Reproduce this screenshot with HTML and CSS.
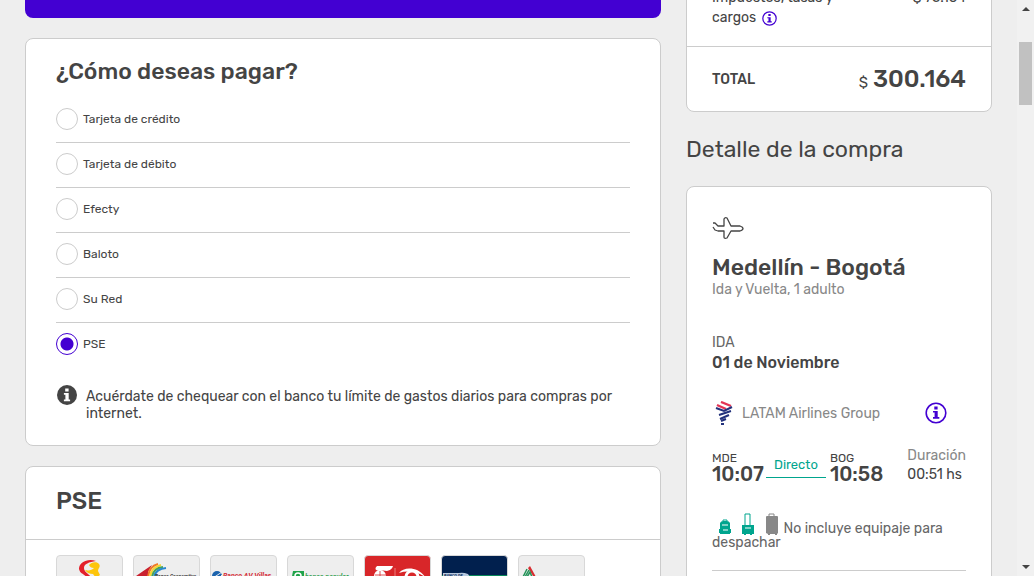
FILE: index.html
```html
<!DOCTYPE html>
<html lang="es">
<head>
<meta charset="utf-8">
<meta name="viewport" content="width=device-width, initial-scale=1">
<title>Checkout</title>
<link rel="stylesheet" href="styles.css">
</head>
<body>
<div class="window">
<main class="page">
  <div class="payment">
    <div class="banner"></div>
    <section class="card">
      <h2 class="card-title">¿Cómo deseas pagar?</h2>
      <div class="options">
        <label class="option"><input class="radio" type="radio" name="method">Tarjeta de crédito</label>
        <label class="option"><input class="radio" type="radio" name="method">Tarjeta de débito</label>
        <label class="option"><input class="radio" type="radio" name="method">Efecty</label>
        <label class="option"><input class="radio" type="radio" name="method">Baloto</label>
        <label class="option"><input class="radio" type="radio" name="method">Su Red</label>
        <label class="option"><input class="radio" type="radio" name="method" checked>PSE</label>
      </div>
      <div class="note">
        <svg class="note-icon" viewBox="0 0 20 20" aria-hidden="true"><circle cx="10" cy="10" r="10" fill="#444"/><path d="M8.2 3.4h3.4v3H8.2zM6.9 8h4.8v6.5h1.4v1.7H6.9v-1.7h1.5V9.7H6.9z" fill="#fff"/></svg>
        <p class="note-text">Acuérdate de chequear con el banco tu límite de gastos diarios para compras por internet.</p>
      </div>
    </section>
    <section class="card banks-card">
      <h2 class="banks-title">PSE</h2>
      <div class="banks">
        <button class="bank" aria-label="Banco 1"><svg viewBox="0 0 65 44"><path d="M39 5C31 2 22 6 22 13c1 5 6 5 8 9h5c-3-4-8-6-8-10 0-4 5-6 12-7z" fill="#e3202b"/><path d="M32 9c2-3 8-4 10-1 2 3-1 4-1 7l2 4-4 3-3-4c-3 0-6-1-8-4 4 1 7 0 9-2-3 0-4-1-5-3z" fill="#fdc50c"/></svg></button>
        <button class="bank" aria-label="Banco Cooperativo"><svg viewBox="0 0 65 44"><path d="M2 20L18 9l-4 7 1 12z" fill="#c9202f"/><path d="M14 23c0-8 3-13 10-15" fill="none" stroke="#f07b28" stroke-width="2"/><path d="M16 23c0-7 3-12 11-14" fill="none" stroke="#f5d52f" stroke-width="2"/><path d="M18 23c0-6 3-11 11-12" fill="none" stroke="#46a35a" stroke-width="2"/><path d="M20 23c0-6 3-10 12-11" fill="none" stroke="#2688cd" stroke-width="2"/><text class="logo-text" x="21" y="22" font-size="5" fill="#333">Banco Cooperativo</text></svg></button>
        <button class="bank" aria-label="Banco AV Villas"><svg viewBox="0 0 65 44"><circle cx="6" cy="20" r="5" fill="#1b63ad"/><path d="M2 22l9-6M5 25l6-6" stroke="#eee" stroke-width="1"/><text class="logo-text" x="12" y="22" font-size="7" fill="#d52b35">Banco AV Villas</text></svg></button>
        <button class="bank" aria-label="Banco Popular"><svg viewBox="0 0 65 44"><path d="M5 15h11v11H3z" fill="#20a34a"/><circle cx="10" cy="20" r="3" fill="none" stroke="#fff" stroke-width="1.5"/><text class="logo-text" x="17" y="23" font-size="7" fill="#35a052">banco popular</text></svg></button>
        <button class="bank bank-red" aria-label="Colpatria"><svg viewBox="0 0 65 44"><path d="M12 10h16q-1 4-6 5-4-1-8 0-6-1-2-5z" fill="#fff"/><circle cx="15" cy="20" r="6" fill="#fff"/><path d="M10 19h11M15 15v11" stroke="#d82629" stroke-width=".8"/><path d="M30 12v20" stroke="#ec7c7d"/><path d="M34 17c5-7 20-6 26 4-7-5-17-7-26-4z" fill="#fff"/><circle cx="47" cy="21" r="6" fill="none" stroke="#fff" stroke-width="3"/></svg></button>
        <button class="bank bank-navy" aria-label="Banco de Occidente"><svg viewBox="0 0 65 44"><path d="M0 19h65v1H0z" fill="#08875a"/><path d="M1 17h16q4-1 9 1l2 3H1z" fill="#b8c9df"/><text class="logo-text" x="2" y="21" font-size="4" fill="#01204e">BANCO DE</text></svg></button>
        <button class="bank" aria-label="Banco 7"><svg viewBox="0 0 65 44"><path d="M9 12l2-2 6 11-3-1z" fill="#d72d31"/><path d="M8 13L4 21h2l4-7M8 21l3-5 2 5" fill="none" stroke="#25945a" stroke-width="1.5"/></svg></button>
      </div>
    </section>
  </div>
  <aside class="summary">
    <section class="card price-card">
      <div class="taxes">
        <p class="tax-label">Impuestos, tasas y cargos <svg class="info-small" viewBox="0 0 22 22" aria-hidden="true"><circle cx="11" cy="11" r="9.8" fill="none" stroke="#4300d2" stroke-width="1.8"/><path d="M9.3 4.4h3.4v3H9.3zM7.8 9h4.9v6.2h1.6v1.8H7.8v-1.8h1.7v-4.4H7.8z" fill="#4300d2"/></svg></p>
        <span>$ 75.164</span>
      </div>
      <div class="total"><span class="total-label">TOTAL</span><span class="total-price"><span class="currency">$</span><strong class="amount">300.164</strong></span></div>
    </section>
    <h2 class="detail-title">Detalle de la compra</h2>
    <section class="card trip-card">
      <svg class="plane" viewBox="0 0 32 22" aria-hidden="true"><path d="M1 6h2l3 3h6V2q1-2 3-1l4 8h9q3 1 3 2.500t-3 2.500h-9l-4 7q-3 1-3-1v-6H6l-3-1-2-3" fill="none" stroke="#444" stroke-width="1.3" stroke-linejoin="round"/></svg>
      <h3 class="route">Medellín - Bogotá</h3>
      <p class="trip-type">Ida y Vuelta, 1 adulto</p>
      <p class="leg">IDA</p>
      <p class="date">01 de Noviembre</p>
      <div class="airline">
        <svg class="latam" viewBox="0 0 18 24" aria-hidden="true"><path d="M2 4l9 4M6 1l10 4" stroke="#e33454" stroke-width="2.4"/><path d="M1 7l8 3 8-4M4 14l12-4M5 18l9-4M6 20l5-2M6 23h3" stroke="#22317c" stroke-width="2" fill="none"/></svg>
        <span class="airline-name">LATAM Airlines Group</span>
        <button class="info-button" aria-label="Información"><svg viewBox="0 0 22 22"><circle cx="11" cy="11" r="9.8" fill="none" stroke="#4300d2" stroke-width="1.6"/><path d="M9.3 4.6h3.3v2.9H9.3zM8 9h4.7v6.1h1.6v1.6H8v-1.6h1.6v-4.5H8z" fill="#4300d2"/></svg></button>
      </div>
      <div class="flight">
        <div><div class="airport">MDE</div><div class="time">10:07</div></div>
        <div class="direct">Directo</div>
        <div><div class="airport">BOG</div><div class="time">10:58</div></div>
        <div class="duration"><div class="duration-label">Duración</div><div>00:51 hs</div></div>
      </div>
      <p class="baggage">
        <svg class="bags" viewBox="0 0 60 22" aria-hidden="true"><g fill="#00a58e"><path d="M2 10q1-2 3-2h4q2 0 3 2v3H2zM1 16h12v4H1zM2 13h10v8H2z"/><path d="M24 12h12v9H24zM26 20h2v2h-2zm6 0h2v2h-2z"/></g><path d="M5 8V7h4v1M27 13V1h5v12" fill="none" stroke="#00a58e"/><path d="M4 12h6M5 17h5M27 15h6" stroke="#fff"/><path d="M48 4q0-1 1-1h10q1 0 1 1v16l-1 1v1h-2v-1h-5v1h-2v-1l-2-1z" fill="#888"/><path d="M51 4V1h5v3" fill="none" stroke="#888"/></svg>
        No incluye equipaje para despachar</p>
      <hr class="divider">
    </section>
  </aside>
</main>
<div class="scrollbar" aria-hidden="true"><span class="arrow arrow-up"></span><span class="thumb"></span><span class="arrow arrow-down"></span></div>
</div>
</body>
</html>
```
FILE: styles.css
```css
* { box-sizing: border-box; }
body { margin: 0; background: #eee; color: #444; font-family: Rubik, Roboto, sans-serif; font-size: 14px; line-height: 20px; }
h2, h3, p { margin: 0; font-weight: 500; }
p { font-weight: 400; }
button { padding: 0; border: 0; background: none; font: inherit; }
svg { display: block; }

.window { display: flex; height: 100vh; overflow: hidden; }
.page { display: flex; flex: 1; gap: 25px; align-items: flex-start; padding: 0 25px; margin-top: -22px; }
.payment { flex: 1; min-width: 0; }
.summary { flex: 0 0 306px; }
.card { background: #fff; border: 1px solid #ccc; border-radius: 8px; }
.payment .card { margin-top: 20px; padding: 17px 30px 23px; }
.banner { height: 40px; border-radius: 8px; background: #4300d2; }

.card-title { font-size: 23px; line-height: 30px; }
.banks-title { font-size: 24px; line-height: 30px; }
.options { margin-top: 12px; }
.option { display: flex; align-items: center; gap: 5px; height: 45px; padding-bottom: 2px; border-bottom: 1px solid #ccc; font-size: 12px; }
.option:last-child { height: 44px; border-bottom: 0; }
.radio { appearance: none; width: 22px; height: 22px; margin: 0; border: 1px solid #ccc; border-radius: 50%; background: #fff; }
.radio:checked { border-color: #4300d2; background: radial-gradient(circle, #4300d2 6px, #fff 7px); }
.note { display: flex; gap: 9px; margin-top: 21px; padding-left: 1px; }
.note-icon { flex: none; width: 20px; height: 20px; margin-top: -3px; }
.note-text { line-height: 17px; }

.payment .banks-card { padding: 0; }
.banks-title { padding: 19px 30px 23px; border-bottom: 1px solid #ccc; }
.banks { display: flex; flex-wrap: wrap; gap: 10px; padding: 15px 30px 30px; }
.bank { width: 67px; height: 46px; border: 1px solid #d8d8d8; border-radius: 4px; background: #eee; overflow: hidden; }
.bank-red { background: #d82629; }
.bank-navy { background: #01204e; }
.logo-text { font-family: Roboto, sans-serif; font-weight: 700; font-style: italic; }

.taxes { display: flex; justify-content: space-between; padding: 9px 25px 18px; }
.tax-label { width: 130px; }
.info-small { display: inline-block; width: 15px; height: 15px; margin-left: 2px; vertical-align: -4px; }
.total { display: flex; align-items: center; justify-content: space-between; height: 65px; padding: 2px 25px 0; border-top: 1px solid #ccc; }
.total-label { font-weight: 500; }
.total-price { display: flex; align-items: baseline; gap: 5px; }
.currency { font-size: 15px; }
.amount { font-size: 24px; font-weight: 500; }
.detail-title { margin: 22px 0; font-size: 23px; font-weight: 400; line-height: 30px; }

.trip-card { padding: 30px 25px; }
.plane { width: 32px; height: 22px; }
.route { margin-top: 14px; font-size: 23px; line-height: 28px; }
.trip-type { margin-top: 1px; line-height: 16px; color: #888; }
.leg { margin-top: 35px; color: #666; }
.date { font-size: 16px; font-weight: 500; }
.airline { display: flex; align-items: center; margin-top: 28px; padding: 0 19px 0 3px; color: #888; }
.airline-name { padding-top: 2px; }
.latam { width: 18px; height: 24px; margin-right: 9px; }
.info-button { width: 22px; height: 22px; margin-left: auto; }
.flight { display: flex; margin-top: 21px; }
.airport { margin-top: 5px; font-size: 12px; line-height: 14px; }
.time { font-size: 20px; font-weight: 500; line-height: 19px; }
.direct { width: 60px; height: 22px; margin: 10px 4px 0 2px; border-bottom: 1px solid #00a58e; color: #00a58e; font-size: 13px; line-height: 18px; text-align: center; }
.duration { margin-left: auto; line-height: 19px; }
.duration-label { color: #888; }
.baggage { margin-top: 29px; color: #666; line-height: 14px; }
.bags { display: inline-block; width: 60px; height: 22px; margin: 0 2px 0 6px; vertical-align: -2px; }
.divider { margin: 20px 0 0; border: 0; border-top: 1px solid #ccc; }

.scrollbar { display: flex; flex: none; flex-direction: column; align-items: center; width: 17px; padding: 7px 0; background: #f1f1f1; }
.arrow { width: 0; height: 0; border: 4px solid transparent; }
.arrow-up { border-top: 0; border-bottom-color: #444; }
.arrow-down { margin-top: auto; border-bottom: 0; border-top-color: #444; }
.thumb { width: 13px; height: 63px; margin-top: 31px; background: #c1c1c1; }
```
